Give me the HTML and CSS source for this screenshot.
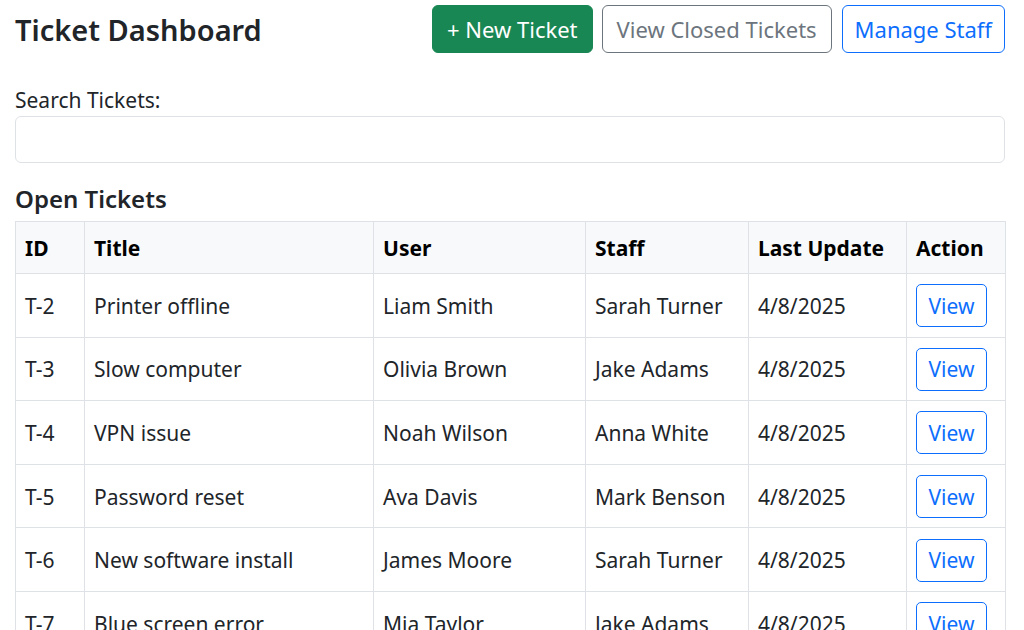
FILE: index.html
```html
<!DOCTYPE html>
<html lang="en">
<head>
<meta charset="utf-8">
<title>Ticket Dashboard</title>
<link rel="stylesheet" href="styles.css">
</head>
<body>
<div class="container">
  <header class="header">
    <h1 class="title">Ticket Dashboard</h1>
    <div class="actions">
      <button class="btn btn-green">+ New Ticket</button>
      <button class="btn btn-grey">View Closed Tickets</button>
      <button class="btn btn-blue">Manage Staff</button>
    </div>
  </header>

  <label class="label" for="search">Search Tickets:</label>
  <input id="search" class="search" type="text">

  <h2 class="section">Open Tickets</h2>
  <table class="table">
    <colgroup>
      <col class="c-id"><col class="c-title"><col class="c-user"><col class="c-staff"><col class="c-date"><col class="c-act">
    </colgroup>
    <thead>
      <tr><th>ID</th><th>Title</th><th>User</th><th>Staff</th><th>Last Update</th><th>Action</th></tr>
    </thead>
    <tbody>
      <tr><td>T-2</td><td>Printer offline</td><td>Liam Smith</td><td>Sarah Turner</td><td>4/8/2025</td><td><button class="view">View</button></td></tr>
      <tr><td>T-3</td><td>Slow computer</td><td>Olivia Brown</td><td>Jake Adams</td><td>4/8/2025</td><td><button class="view">View</button></td></tr>
      <tr><td>T-4</td><td>VPN issue</td><td>Noah Wilson</td><td>Anna White</td><td>4/8/2025</td><td><button class="view">View</button></td></tr>
      <tr><td>T-5</td><td>Password reset</td><td>Ava Davis</td><td>Mark Benson</td><td>4/8/2025</td><td><button class="view">View</button></td></tr>
      <tr><td>T-6</td><td>New software install</td><td>James Moore</td><td>Sarah Turner</td><td>4/8/2025</td><td><button class="view">View</button></td></tr>
      <tr><td>T-7</td><td>Blue screen error</td><td>Mia Taylor</td><td>Jake Adams</td><td>4/8/2025</td><td><button class="view">View</button></td></tr>
    </tbody>
  </table>
</div>
</body>
</html>
```

FILE: styles.css
```css
* { box-sizing: border-box; }
html, body { margin: 0; padding: 0; background: #fff; }
body {
  font-family: "Noto Sans", "Open Sans", sans-serif;
  color: #212529;
  font-size: 21px;
}
.container { padding: 5px 19px 0 15px; }
.header {
  display: flex;
  justify-content: space-between;
  align-items: center;
  height: 48px;
}
.title {
  margin: 0;
  font-size: 29px;
  font-weight: 600;
  line-height: 1;
}
.actions { display: flex; gap: 9px; }
.btn {
  font-family: inherit;
  font-size: 22px;
  height: 48px;
  padding: 0 14px;
  border-radius: 6px;
  background: #fff;
  border: 1px solid;
  line-height: 1;
}
.btn-green { background: #198754; border-color: #198754; color: #fff; }
.btn-grey { border-color: #6c757d; color: #6c757d; margin-right: 1px; }
.btn-blue { border-color: #0d6efd; color: #0d6efd; padding: 0 12px; }
.label {
  display: block;
  margin-top: 33px;
  line-height: 28px;
}
.search {
  display: block;
  width: 100%;
  height: 47px;
  margin-top: 2px;
  border: 1px solid #dee2e6;
  border-radius: 6px;
  font-family: inherit;
  font-size: 21px;
}
.section {
  margin: 20px 0 0;
  font-size: 24px;
  font-weight: 600;
  line-height: 32px;
}
.table {
  margin-top: 6px;
  width: 990px;
  border-collapse: collapse;
  table-layout: fixed;
}
.c-id { width: 69px; }
.c-title { width: 289px; }
.c-user { width: 212px; }
.c-staff { width: 163px; }
.c-date { width: 158px; }
.c-act { width: 99px; }
.table th, .table td {
  border: 1px solid #dee2e6;
  padding: 1px 9px 0;
  text-align: left;
  vertical-align: middle;
  white-space: nowrap;
}
.table th {
  background: #f8f9fa;
  height: 52px;
  font-weight: 700;
  color: #000;
}
.table td { height: 63.6px; }
.view {
  font-family: inherit;
  font-size: 21px;
  width: 71px;
  height: 43px;
  padding: 0;
  background: #fff;
  border: 1px solid #0d6efd;
  color: #0d6efd;
  border-radius: 5px;
}
```
